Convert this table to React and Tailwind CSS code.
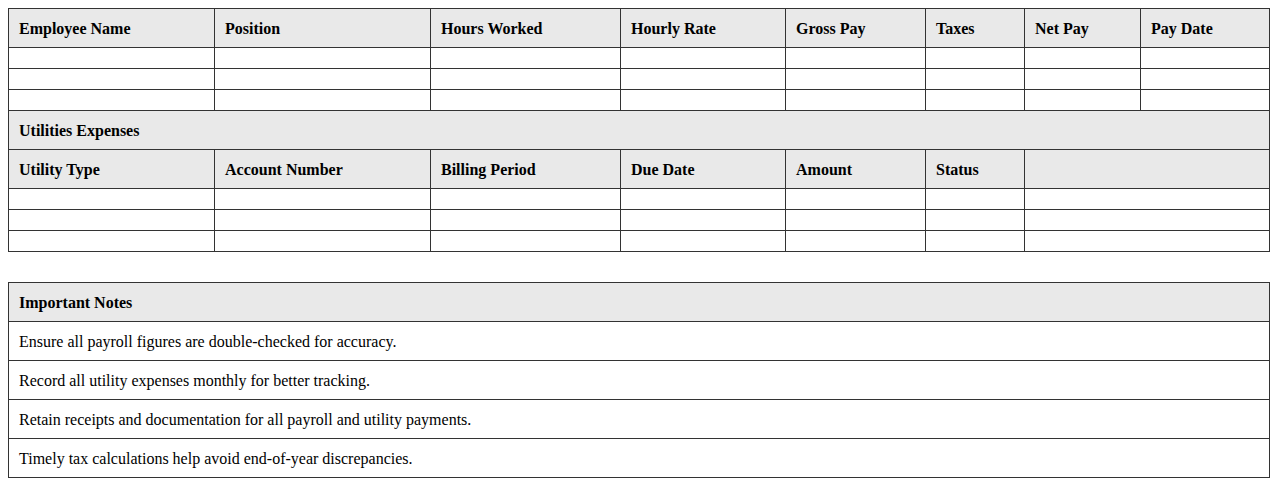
export default function App() {
  const th = "border border-[#333] bg-[#e9e9e9] px-[10px] pt-[11px] pb-[9px] text-left font-bold";
  const td = "border border-[#333] px-[10px] pt-[11px] pb-[9px]";
  const payroll = ["Employee Name", "Position", "Hours Worked", "Hourly Rate", "Gross Pay", "Taxes", "Net Pay", "Pay Date"];
  const utility = ["Utility Type", "Account Number", "Billing Period", "Due Date", "Amount", "Status"];
  const notes = [
    "Ensure all payroll figures are double-checked for accuracy.",
    "Record all utility expenses monthly for better tracking.",
    "Retain receipts and documentation for all payroll and utility payments.",
    "Timely tax calculations help avoid end-of-year discrepancies.",
  ];
  return (
    <div className="bg-white p-2 text-[16px] leading-[18px] text-black" style={{ fontFamily: '"Liberation Serif", "Times New Roman", serif' }}>
      <table className="w-full table-fixed border-collapse">
        <colgroup>
          <col className="w-[206px]" />
          <col className="w-[216px]" />
          <col className="w-[190px]" />
          <col className="w-[165px]" />
          <col className="w-[140px]" />
          <col className="w-[99px]" />
          <col className="w-[116px]" />
          <col />
        </colgroup>
        <thead>
          <tr>
            {payroll.map((h) => (
              <th key={h} className={th}>{h}</th>
            ))}
          </tr>
        </thead>
        <tbody>
          {[0, 1, 2].map((r) => (
            <tr key={r}>
              {payroll.map((h) => (
                <td key={h} className={td}></td>
              ))}
            </tr>
          ))}
          <tr>
            <th colSpan={8} className={th}>Utilities Expenses</th>
          </tr>
          <tr>
            {utility.map((h) => (
              <th key={h} className={th}>{h}</th>
            ))}
            <th colSpan={2} className={th}></th>
          </tr>
          {[0, 1, 2].map((r) => (
            <tr key={r}>
              {utility.map((h) => (
                <td key={h} className={td}></td>
              ))}
              <td colSpan={2} className={td}></td>
            </tr>
          ))}
        </tbody>
      </table>
      <table className="mt-[30px] w-full border-collapse">
        <thead>
          <tr>
            <th className={th}>Important Notes</th>
          </tr>
        </thead>
        <tbody>
          {notes.map((n) => (
            <tr key={n}>
              <td className={td}>{n}</td>
            </tr>
          ))}
        </tbody>
      </table>
    </div>
  );
}
